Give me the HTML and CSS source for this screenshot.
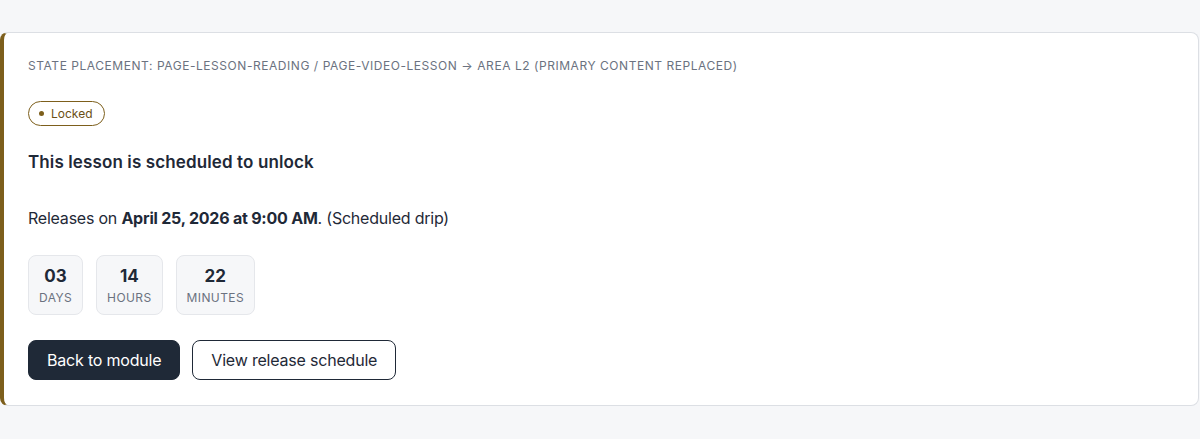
FILE: index.html
```html
<!DOCTYPE html>
<html lang="en">
<head>
<meta charset="utf-8">
<title>Locked lesson</title>
<link rel="stylesheet" href="styles.css">
</head>
<body>
<main class="page">
  <section class="card">
    <p class="meta">State placement: page-lesson-reading / page-video-lesson → Area L2 (primary content replaced)</p>
    <div class="badge-row"><span class="badge"><span class="dot"></span>Locked</span></div>
    <h2 class="title">This lesson is scheduled to unlock</h2>
    <p class="release">Releases on <strong>April 25, 2026 at 9:00 AM</strong>. (Scheduled drip)</p>
    <div class="countdown">
      <div class="unit"><span class="num">03</span><span class="label">Days</span></div>
      <div class="unit"><span class="num">14</span><span class="label">Hours</span></div>
      <div class="unit"><span class="num">22</span><span class="label">Minutes</span></div>
    </div>
    <div class="actions">
      <button class="btn btn-primary">Back to module</button>
      <button class="btn btn-outline">View release schedule</button>
    </div>
  </section>
</main>
</body>
</html>
```
FILE: styles.css
```css
* { box-sizing: border-box; }
html, body { margin: 0; padding: 0; }
body {
  background: #f6f7f9;
  font-family: Inter, "Noto Sans", "Liberation Sans", sans-serif;
  color: #1f2937;
}
.page {
  padding: 32px 1px 33px 0;
}
.card {
  background: #fff;
  border: 1px solid #dcdfe4;
  border-left: 4px solid #7d5f1c;
  border-radius: 8px;
  padding: 23px 24px 25px 24px;
}
.meta {
  margin: 0;
  font-size: 12px;
  line-height: 20px;
  letter-spacing: 0.55px;
  text-transform: uppercase;
  color: #6b7280;
}
.badge-row {
  margin-top: 25px;
  display: flex;
}
.badge {
  display: inline-flex;
  align-items: center;
  gap: 7px;
  height: 25px;
  padding: 0 11px 0 10px;
  border: 1px solid #7d5f1c;
  border-radius: 999px;
  font-size: 12px;
  color: #6a4f14;
}
.dot {
  width: 5px;
  height: 5px;
  border-radius: 50%;
  background: #7d5f1c;
}
.title {
  margin: 24px 0 0;
  font-size: 17px;
  line-height: 24px;
  font-weight: 600;
  letter-spacing: 0.12px;
  color: #1f2937;
}
.release {
  margin: 32px 0 0;
  font-size: 16px;
  line-height: 24px;
  color: #1f2937;
  letter-spacing: -0.22px;
}
.release strong { font-weight: 700; }
.countdown {
  margin-top: 25px;
  display: flex;
  gap: 13px;
}
.unit {
  display: flex;
  flex-direction: column;
  align-items: center;
  padding: 9px 10px 8px;
  min-width: 54px;
  background: #f6f7f9;
  border: 1px solid #e5e7eb;
  border-radius: 8px;
}
.num {
  font-size: 17px;
  line-height: 22px;
  font-weight: 700;
  color: #1f2937;
}
.label {
  margin-top: 3px;
  font-size: 12px;
  line-height: 16px;
  letter-spacing: 0.4px;
  text-transform: uppercase;
  color: #6b7280;
}
.actions {
  margin-top: 25px;
  display: flex;
  gap: 12px;
}
.btn {
  height: 40px;
  padding: 0 18px;
  border-radius: 8px;
  font-family: inherit;
  font-size: 16px;
  letter-spacing: -0.2px;
  cursor: pointer;
}
.btn-primary {
  background: #1f2937;
  color: #fff;
  border: 1px solid #1f2937;
}
.btn-outline {
  background: #fff;
  color: #1f2937;
  border: 1px solid #1f2937;
}
```
